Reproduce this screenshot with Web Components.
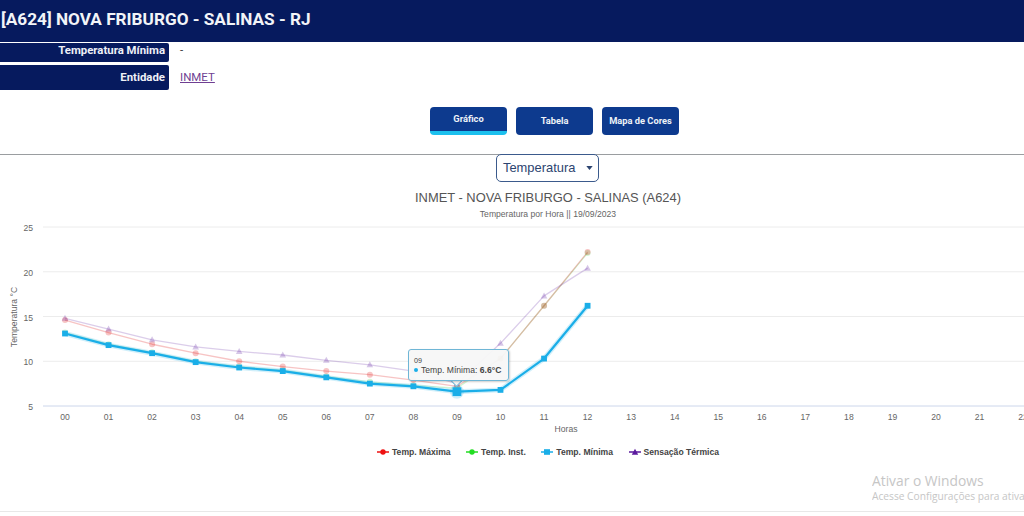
<!DOCTYPE html>
<html lang="pt-BR"><head><meta charset="utf-8"><title>INMET</title>
<style>
html,body{margin:0;padding:0;background:#fff;overflow:hidden}
body{width:1024px;height:516px;font-family:Roboto,"Liberation Sans",sans-serif;position:relative}
</style></head><body>
<station-header>[A624] NOVA FRIBURGO - SALINAS - RJ</station-header>
<info-row label="Temperatura Mínima" h="19" mt="1" pb="6">-</info-row>
<info-row label="Entidade" h="25" mt="3" pb="1"><a href="#" style="color:#6f3f92">INMET</a></info-row>
<tab-bar></tab-bar>
<var-select>Temperatura</var-select>
<chart-title></chart-title>
<temp-chart></temp-chart>
<page-foot></page-foot>
<win-mark></win-mark>
<script>
function def(name, html, init){
  customElements.define(name, class extends HTMLElement{
    connectedCallback(){
      if(this.shadowRoot) return;
      const r=this.attachShadow({mode:'open'});
      r.innerHTML=typeof html==='function'?html(this):html;
      if(init) init(r,this);
    }
  });
}
def('station-header',`<style>:host{display:flex;align-items:center;height:42px;box-sizing:border-box;padding:0 0 4px 1px;background:#061a5e;color:#f2f4f8;font:700 17.2px Roboto,sans-serif}</style><slot></slot>`);
def('info-row',el=>`<style>
:host{display:flex;align-items:center;height:${el.getAttribute('h')}px;margin-top:${el.getAttribute('mt')}px}
.l{box-sizing:border-box;width:169px;height:100%;background:#061a5e;color:#eef0f6;font:700 11.4px Roboto,sans-serif;display:flex;align-items:center;justify-content:flex-end;padding:0 4px ${el.getAttribute('pb')}px 0;border-radius:0 2px 2px 0}
.v{padding:0 0 ${el.getAttribute('pb')}px 11px;font:11.5px Roboto,sans-serif;color:#333}
</style><div class="l">${el.getAttribute('label')}</div><div class="v"><slot></slot></div>`);
def('tab-btn',el=>`<style>
:host{display:flex;box-sizing:border-box;width:77px;height:28px;background:#0d3a8e;color:#eef2f8;border-radius:4px;font:700 9.3px Roboto,sans-serif;align-items:center;justify-content:center;padding-bottom:1px}
:host([active]){border-bottom:4px solid #1cc0ee;padding-bottom:2px}
</style><slot></slot>`);
def('tab-bar',`<style>:host{display:flex;justify-content:center;gap:9px;margin-top:17px;padding-left:85px;height:47px;border-bottom:1px solid #9a9da0;box-sizing:content-box}</style>
<tab-btn active>Gráfico</tab-btn><tab-btn>Tabela</tab-btn><tab-btn>Mapa de Cores</tab-btn>`);
def('var-select',`<style>
:host{display:flex;box-sizing:border-box;width:103px;height:28px;margin:-1px 0 0 496px;border:1px solid #3b5a8c;border-radius:5px;background:#fff;color:#2c4470;font:12.9px "Liberation Sans",Arial,sans-serif;align-items:center;padding:0 0 1px 6px;gap:11px}
svg{width:7px;height:4px;margin-top:1px;flex:none}
</style><slot></slot><svg viewBox="0 0 8 5"><path d="M0 0h8L4 5z" fill="#2c4470"/></svg>`);
def('chart-title',`<style>
:host{display:block;text-align:center;padding-left:72px;font-family:"Liberation Sans",Arial,sans-serif}
.t{font-size:12.9px;color:#555;line-height:16px;margin-top:8px}
.s{font-size:8.6px;color:#666;line-height:12px;margin-top:2px}
</style><div class="t">INMET - NOVA FRIBURGO - SALINAS (A624)</div><div class="s">Temperatura por Hora || 19/09/2023</div>`);
def('temp-chart',`<style>:host{display:block;position:relative;height:290px;overflow:hidden}
svg{display:block;width:1024px;height:290px;font-family:"Liberation Sans",Arial,sans-serif}
.tip{position:absolute;left:408px;top:129px;width:101px;height:32px;box-sizing:border-box;background:rgba(247,247,247,.95);border:1px solid #6fb6d6;border-radius:3px;box-shadow:1px 1px 2px rgba(0,0,0,.2);font:8.6px "Liberation Sans",Arial,sans-serif;color:#444;padding:6px 0 0 5px;line-height:11px;white-space:nowrap}
.tip small{display:block;font-size:7.2px;line-height:9px;color:#444}
.tip i{display:inline-block;width:4px;height:4px;border-radius:50%;background:#1aaee8;margin:0 3px 1px 0;vertical-align:middle}
.arrow{position:absolute;left:452px;top:156px;width:8px;height:8px;transform:rotate(45deg);background:#f7f7f7;border:solid #6fb6d6;border-width:0 1px 1px 0}
.legend{position:absolute;left:0;top:227px;display:flex;gap:15.5px;padding-left:377px;font:700 8.6px "Liberation Sans",Arial,sans-serif;color:#444;white-space:nowrap}
.legend span{display:flex;align-items:center;gap:3px}
</style>
<svg id="s" viewBox="0 220 1024 290"></svg>
<div class="arrow"></div>
<div class="tip"><small>09</small><i></i>Temp. Mínima: <b>6.6°C</b></div>
<div class="legend">
<span><svg width="12" height="8" style="width:12px;height:8px"><path d="M0 4h12" stroke="#e11" stroke-width="1.5"/><circle cx="6" cy="4" r="2.7" fill="#e11"/></svg>Temp. Máxima</span>
<span><svg width="12" height="8" style="width:12px;height:8px"><path d="M0 4h12" stroke="#2d2" stroke-width="1.5"/><circle cx="6" cy="4" r="2.7" fill="#2d2"/></svg>Temp. Inst.</span>
<span><svg width="12" height="8" style="width:12px;height:8px"><path d="M0 4h12" stroke="#1aaee8" stroke-width="1.5"/><rect x="3" y="1.2" width="6" height="5.6" fill="#1aaee8"/></svg>Temp. Mínima</span>
<span><svg width="12" height="8" style="width:12px;height:8px"><path d="M0 4h12" stroke="#5b1a9e" stroke-width="1.5"/><path d="M6 .8l3.2 6H2.8z" fill="#5b1a9e"/></svg>Sensação Térmica</span>
</div>`,(r)=>{
  const X=h=>65+43.55*h, Y=v=>406-(v-5)*8.95;
  let o='';
  [5,10,15,20,25].forEach(v=>{
    const y=Y(v);
    o+=`<path d="M43 ${y}H1024" stroke="${v===5?'#ccd6eb':'#ececec'}" stroke-width="1"/>`;
    o+=`<text x="33" y="${y+4}" text-anchor="end" font-size="8.6" fill="#666">${v}</text>`;
  });
  for(let h=0;h<=22;h++){
    o+=`<text x="${X(h)}" y="419.5" text-anchor="middle" font-size="8.6" fill="#666">${String(h).padStart(2,'0')}</text>`;
  }
  o+=`<text x="566" y="432" text-anchor="middle" font-size="8.6" fill="#666">Horas</text>`;
  o+=`<text transform="translate(17 317) rotate(-90)" text-anchor="middle" font-size="8.6" fill="#666">Temperatura °C</text>`;
  const line=(d,c,op,w)=>`<polyline fill="none" stroke="${c}" stroke-opacity="${op}" stroke-width="${w}" stroke-linejoin="round" points="${d.map((v,h)=>X(h)+','+Y(v)).join(' ')}"/>`;
  const max=[14.6,13.2,11.9,10.9,10.0,9.4,8.9,8.5,7.9,7.2,10.3,16.2,22.2];
  const ins=[13.2,11.9,11.0,10.0,9.4,9.0,8.3,7.7,7.3,7.0,10.3,16.2,22.1];
  const sen=[14.8,13.6,12.4,11.6,11.1,10.7,10.1,9.6,8.9,7.5,12.0,17.3,20.4];
  const min=[13.1,11.8,10.9,9.9,9.3,8.9,8.2,7.5,7.2,6.6,6.8,10.3,16.2];
  o+=line(ins,'#22cc22',.2,1.3);
  o+=line(max,'#e01515',.25,1.3);
  o+=line(sen,'#5b1a9e',.22,1.3);
  ins.forEach((v,h)=>o+=`<circle cx="${X(h)}" cy="${Y(v)}" r="3" fill="#22cc22" fill-opacity=".2"/>`);
  max.forEach((v,h)=>o+=`<circle cx="${X(h)}" cy="${Y(v)}" r="3" fill="#e01515" fill-opacity=".25"/>`);
  sen.forEach((v,h)=>{const x=X(h),y=Y(v);o+=`<path d="M${x} ${y-3.5}l3.3 6h-6.6z" fill="#5b1a9e" fill-opacity=".25"/>`});
  o+=`<path d="${min.map((v,h)=>(h?'L':'M')+X(h)+' '+Y(v)).join('')}" fill="none" stroke="#1aaee8" stroke-opacity=".2" stroke-width="5"/>`;
  o+=line(min,'#1aaee8',1,2.2);
  min.forEach((v,h)=>{const s=h===9?4.4:2.9;
    if(h===9)o+=`<circle cx="${X(h)}" cy="${Y(v)}" r="7" fill="#1aaee8" fill-opacity=".2"/>`;
    o+=`<rect x="${X(h)-s}" y="${Y(v)-s}" width="${2*s}" height="${2*s}" fill="#1aaee8"/>`});
  r.getElementById('s').innerHTML=o;
});
def('page-foot',`<style>:host{position:absolute;left:0;right:0;top:511px;height:1px;background:#e8e8e8}</style>`);
def('win-mark',`<style>:host{position:absolute;left:872px;top:472px;width:152px;overflow:hidden;white-space:nowrap;font-family:"Open Sans",sans-serif;color:#c6c6c6}
.a{font-size:13.8px;line-height:17px}.b{font-size:10.2px;line-height:15px}</style><div class="a">Ativar o Windows</div><div class="b">Acesse Configurações para ativa</div>`);
</script>
</body></html>
